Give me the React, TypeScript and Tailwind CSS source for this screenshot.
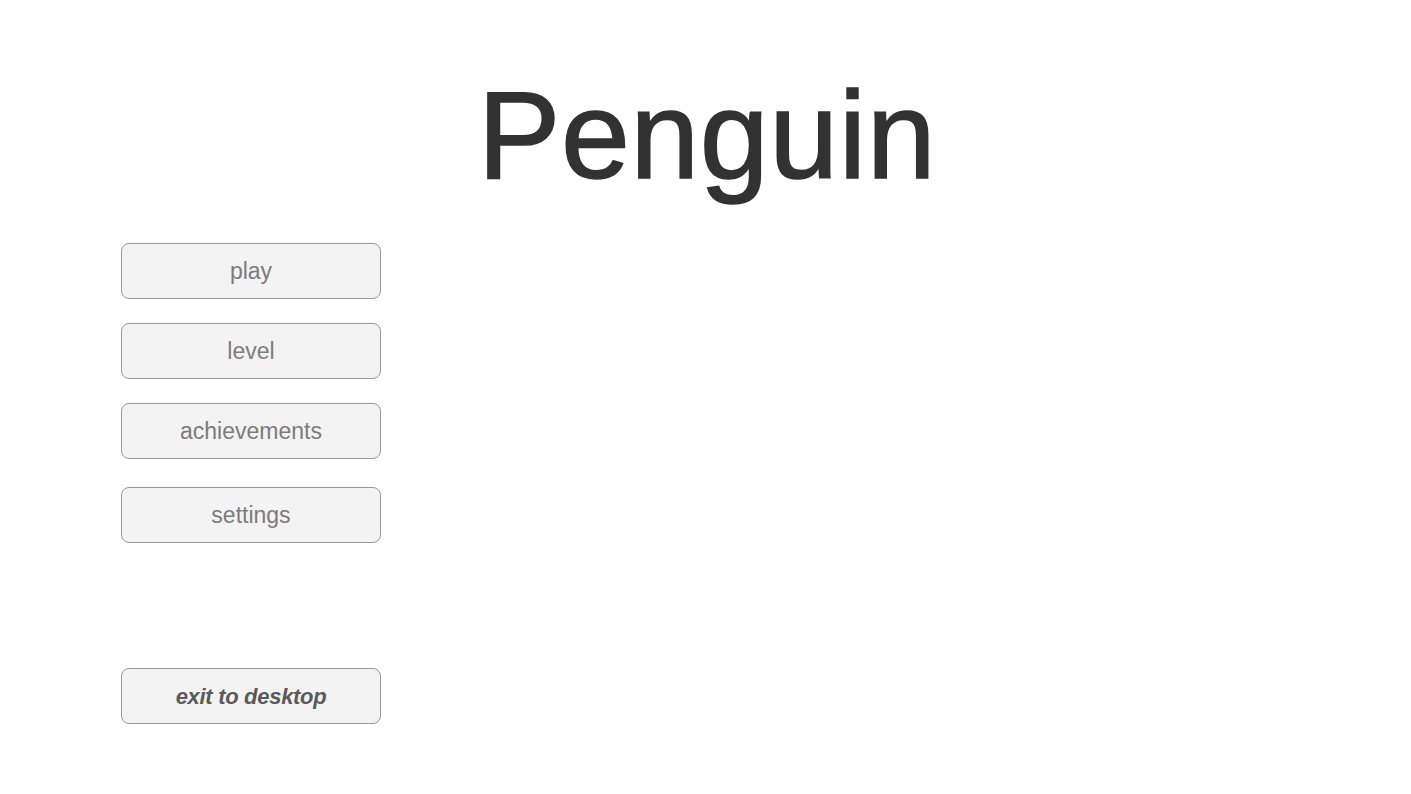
export default function App() {
  const items = ["play", "level", "achievements", "settings"];
  return (
    <div className="w-[1411px] h-[794px] bg-white font-['Liberation_Sans',Arial,sans-serif] overflow-hidden">
      <h1 className="pt-[73px] pl-[3px] text-center text-[124px] leading-none tracking-[0.5px] text-[#323232] [-webkit-text-stroke:1.5px_#323232]">
        Penguin
      </h1>
      <div className="pl-[121px] mt-[46px] flex flex-col">
        {items.map((label, i) => (
          <button
            key={label}
            className={`w-[260px] h-[56px] rounded-[8px] border border-[#9a9a9a] bg-[#f3f3f3] text-[23px] text-[#7c7c7c] ${
              i === 3 ? "mt-[28px]" : i > 0 ? "mt-[24px]" : ""
            }`}
          >
            {label}
          </button>
        ))}
        <button className="mt-[125px] w-[260px] h-[56px] rounded-[8px] border border-[#9a9a9a] bg-[#f3f3f3] text-[22px] font-bold italic tracking-[-0.3px] text-[#5a5a5a]">
          exit to desktop
        </button>
      </div>
    </div>
  );
}
